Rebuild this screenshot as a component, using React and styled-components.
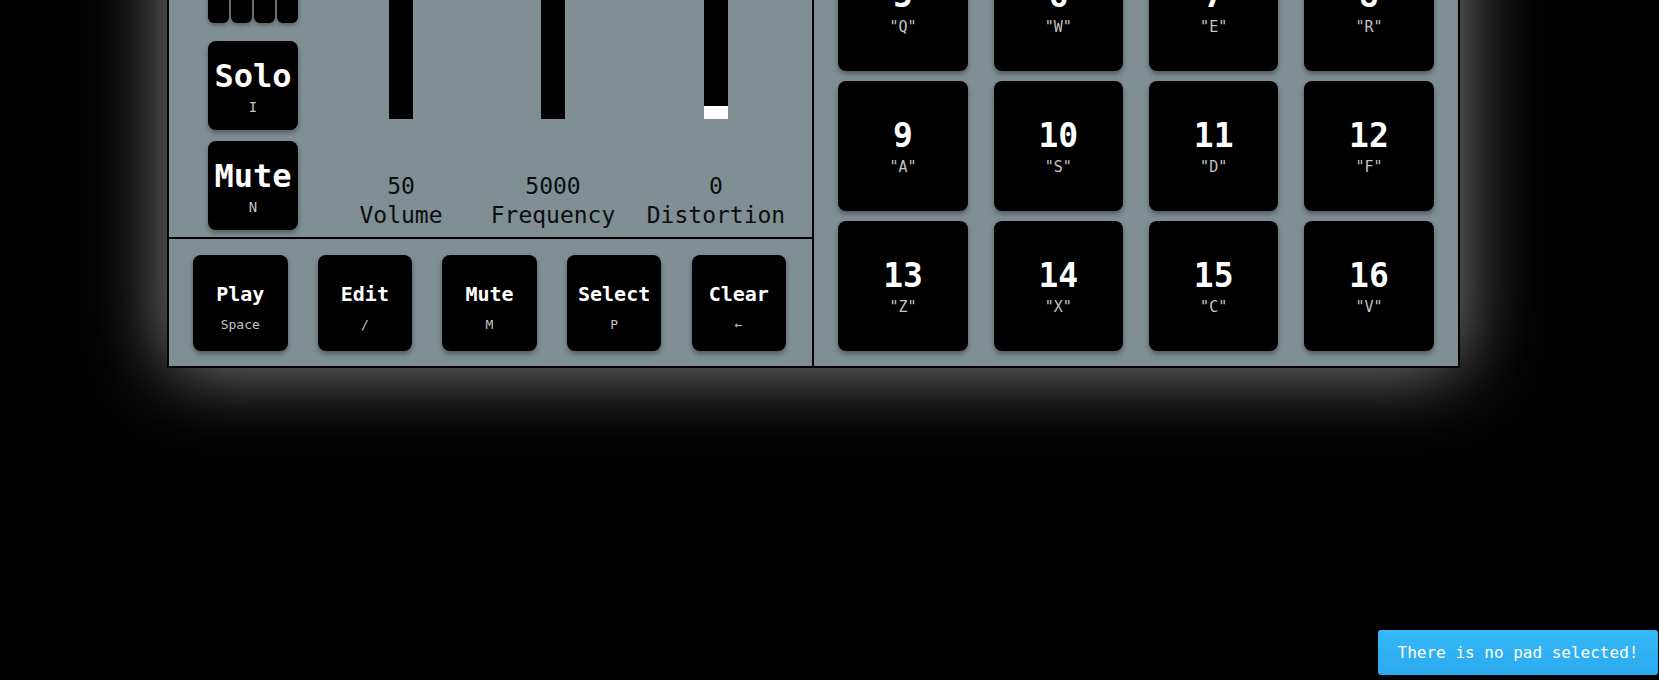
import React from 'react';
import styled, { createGlobalStyle } from 'styled-components';

const Global = createGlobalStyle`
  html { overflow: hidden; background: #000; }
  body { margin: 0; padding: 0; background: #000; min-height: 100vh; font-family: "DejaVu Sans Mono", "Liberation Mono", monospace; }
  * { box-sizing: border-box; }
`;

const Page = styled.div`
  padding-left: 167px;
  margin-top: -217px;
`;

const Panel = styled.div`
  display: flex;
  width: 1293px;
  border: 2px solid #000;
  background: #7f8f94;
  box-shadow: 0 0 75px rgba(255, 255, 255, 0.55);
`;

const LeftSection = styled.div`
  width: 645px;
  display: flex;
  flex-direction: column;
  border-right: 2px solid #000;
`;

const TopArea = styled.div`
  height: 454px;
  display: flex;
  align-items: flex-end;
  padding: 0 0 7px 39px;
  border-bottom: 2px solid #000;
`;

const KeyColumn = styled.div`
  width: 90px;
  display: flex;
  flex-direction: column;
  gap: 11px;
`;

const MiniRow = styled.div`
  display: grid;
  grid-template-columns: repeat(4, 1fr);
  gap: 2px;
  height: 60px;
  margin-bottom: 7.5px;
`;

const MiniKey = styled.div`
  background: #000;
  border-radius: 6px;
  box-shadow: 0 2px 4px rgba(0, 0, 0, 0.35);
`;

const Key = styled.div`
  width: ${(p) => p.$w}px;
  height: ${(p) => p.$h}px;
  background: #000;
  border-radius: 8px;
  box-shadow: 0 3px 5px rgba(0, 0, 0, 0.35);
  display: flex;
  flex-direction: column;
  align-items: center;
  justify-content: center;
  gap: ${(p) => p.$gap}px;
  padding-top: ${(p) => p.$pt || 0}px;
  color: #fff;
`;

const KeyTitle = styled.div`
  font-size: ${(p) => p.$size}px;
  font-weight: bold;
  line-height: normal;
  color: #fff;
`;

const KeyHint = styled.div`
  font-size: ${(p) => p.$size}px;
  line-height: normal;
  color: #c4c4c4;
`;

const SliderArea = styled.div`
  display: flex;
  margin-left: 32px;
`;

const SliderCol = styled.div`
  width: ${(p) => p.$w}px;
  display: flex;
  flex-direction: column;
  align-items: center;
`;

const Track = styled.div`
  position: relative;
  width: 24px;
  height: 300px;
  background: #000;
  margin-bottom: 53px;
`;

const Thumb = styled.div`
  position: absolute;
  left: 0;
  width: 24px;
  height: 13px;
  background: #fff;
`;

const SliderText = styled.div`
  font-size: 23px;
  line-height: 29px;
  color: #0d0d0d;
`;

const BottomArea = styled.div`
  height: 127px;
  display: flex;
  align-items: center;
  justify-content: space-between;
  padding: 0 26px 0 24px;
`;

const RightSection = styled.div`
  width: 644px;
  padding: 16px 0 15px 24.3px;
  display: grid;
  grid-template-columns: repeat(4, 129.5px);
  grid-auto-rows: 130px;
  column-gap: 25.8px;
  row-gap: 10px;
`;

const Toast = styled.div`
  position: fixed;
  right: 1px;
  bottom: 5px;
  width: 280px;
  height: 45px;
  border-radius: 3px;
  background: linear-gradient(#35b9f8, #2ba9ef);
  color: #fff;
  font-size: 16px;
  display: flex;
  align-items: center;
  justify-content: center;
`;

const sliders = [
  { label: 'Volume', value: 50, max: 100, w: 142 },
  { label: 'Frequency', value: 5000, max: 10000, w: 162 },
  { label: 'Distortion', value: 0, max: 100, w: 164 },
];

const actions = [
  ['Play', 'Space'],
  ['Edit', '/'],
  ['Mute', 'M'],
  ['Select', 'P'],
  ['Clear', '←'],
];

const keys = ['1', '2', '3', '4', 'Q', 'W', 'E', 'R', 'A', 'S', 'D', 'F', 'Z', 'X', 'C', 'V'];

export default function App() {
  return (
    <>
      <Global />
      <Page>
        <Panel>
          <LeftSection>
            <TopArea>
              <KeyColumn>
                <MiniRow>
                  <MiniKey />
                  <MiniKey />
                  <MiniKey />
                  <MiniKey />
                </MiniRow>
                <Key $w={90} $h={89} $gap={4}>
                  <KeyTitle $size={32}>Solo</KeyTitle>
                  <KeyHint $size={14}>I</KeyHint>
                </Key>
                <Key $w={90} $h={89} $gap={4}>
                  <KeyTitle $size={32}>Mute</KeyTitle>
                  <KeyHint $size={14}>N</KeyHint>
                </Key>
              </KeyColumn>
              <SliderArea>
                {sliders.map((s) => (
                  <SliderCol key={s.label} $w={s.w}>
                    <Track>
                      <Thumb style={{ bottom: `${(s.value / s.max) * (300 - 13)}px` }} />
                    </Track>
                    <SliderText>{s.value}</SliderText>
                    <SliderText>{s.label}</SliderText>
                  </SliderCol>
                ))}
              </SliderArea>
            </TopArea>
            <BottomArea>
              {actions.map(([t, k]) => (
                <Key key={t} $w={94.5} $h={96} $gap={11} $pt={8}>
                  <KeyTitle $size={20}>{t}</KeyTitle>
                  <KeyHint $size={13}>{k}</KeyHint>
                </Key>
              ))}
            </BottomArea>
          </LeftSection>
          <RightSection>
            {keys.map((k, i) => (
              <Key key={k} $w={129.5} $h={130} $gap={3}>
                <KeyTitle $size={33}>{i + 1}</KeyTitle>
                <KeyHint $size={15}>"{k}"</KeyHint>
              </Key>
            ))}
          </RightSection>
        </Panel>
      </Page>
      <Toast>There is no pad selected!</Toast>
    </>
  );
}
